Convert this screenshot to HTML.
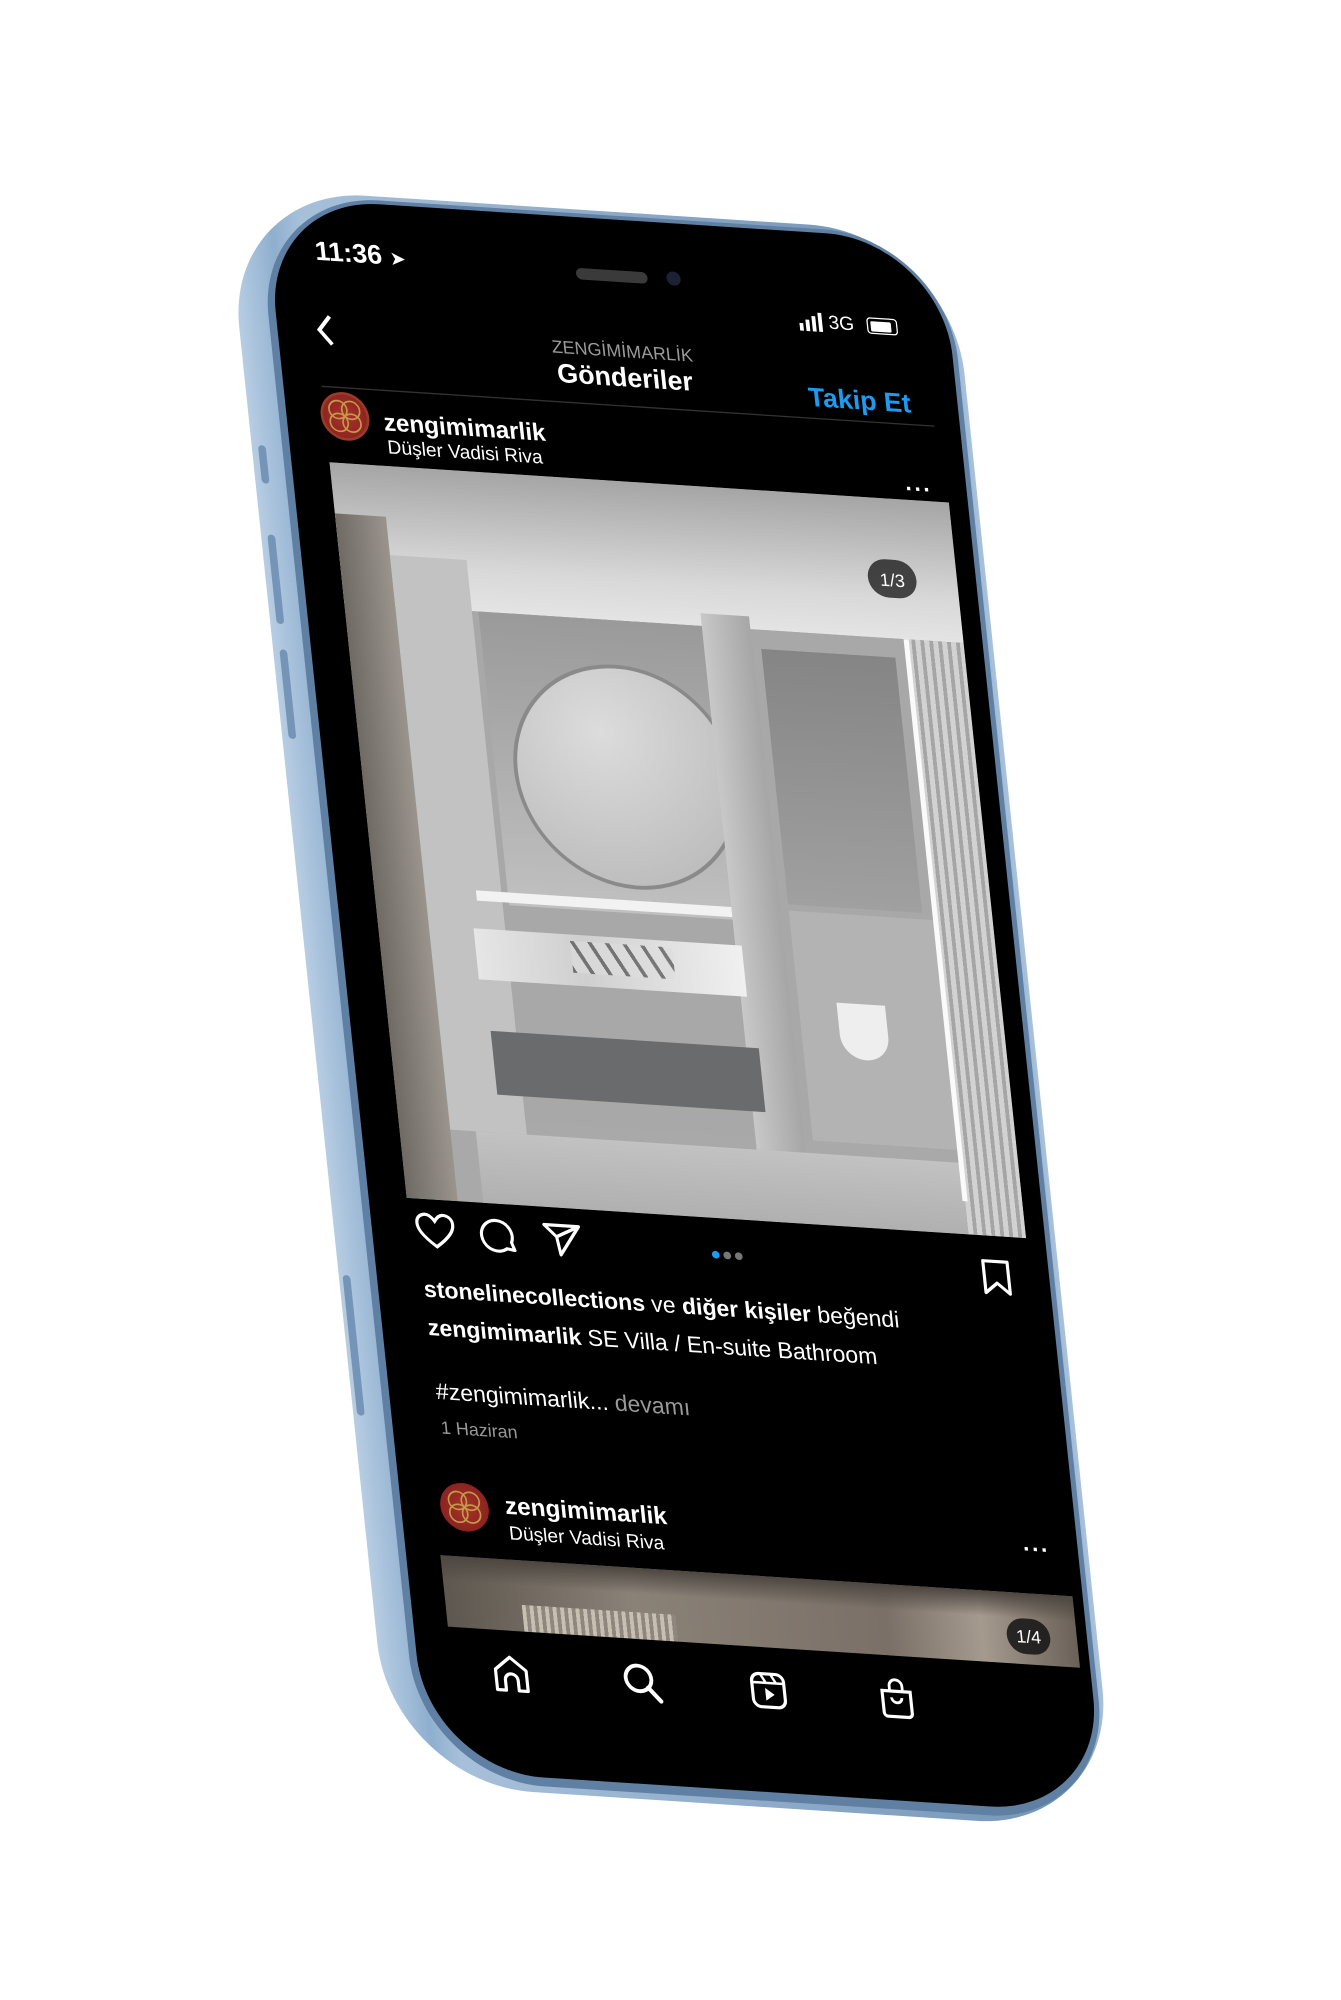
<!DOCTYPE html>
<html><head><meta charset="utf-8"><style>
html,body{margin:0;padding:0;background:#fff;width:1341px;height:2000px;overflow:hidden}
#w{position:absolute;left:0;top:0;width:1px;height:1px;transform-origin:0 0;transform:matrix(1.277,0.083,0.134,1.277,329.5,462.3)}
#w div,#w svg{position:absolute}
.t{font-family:"Liberation Sans","DejaVu Sans",sans-serif;color:#fff;white-space:nowrap;line-height:1}
</style></head><body>
<div id="w">
 <!-- phone body -->
 <div style="left:-60px;top:-212px;width:568px;height:1250px;border-radius:110px;background:linear-gradient(90deg,#b7cde3 0%,#8fafcf 6%,#a7c0da 10%,#7494b6 95%,#a9c2dc 100%)"></div>
 <div style="left:-36px;top:-209px;width:540px;height:1242px;border-radius:96px;background:#5f7fa3"></div>
 <div style="left:-30px;top:-206px;width:530px;height:1232px;border-radius:90px;background:#000"></div>
 <!-- buttons on side -->
 <div style="left:-55px;top:-10px;width:6px;height:30px;border-radius:3px;background:#7595b8"></div>
 <div style="left:-55px;top:60px;width:6px;height:70px;border-radius:3px;background:#7595b8"></div>
 <div style="left:-55px;top:150px;width:6px;height:70px;border-radius:3px;background:#7595b8"></div>
 <div style="left:-57px;top:640px;width:6px;height:110px;border-radius:3px;background:#7595b8"></div>

 <!-- status -->
 <div class="t" style="left:6px;top:-176px;font-size:21px;font-weight:bold">11:36 <span style="font-size:15px">➤</span></div>
 <div style="left:210px;top:-166px;width:56px;height:9px;border-radius:5px;background:#3a3a3a"></div>
 <div style="left:281px;top:-168px;width:11px;height:11px;border-radius:6px;background:#1c2233"></div>
 <svg style="left:382px;top:-143px" width="20" height="16"><rect x="0" y="9" width="3" height="6" fill="#fff"/><rect x="5" y="6" width="3" height="9" fill="#fff"/><rect x="10" y="3" width="3" height="12" fill="#fff"/><rect x="15" y="0" width="3" height="15" fill="#fff"/></svg>
 <div class="t" style="left:405px;top:-143px;font-size:15px">3G</div>
 <div style="left:435px;top:-142px;width:22px;height:11px;border:1.5px solid #fff;border-radius:3px"></div>
 <div style="left:438px;top:-139px;width:16px;height:8px;background:#fff;border-radius:1px"></div>

 <!-- nav -->
 <svg style="left:-2px;top:-118px" width="20" height="30"><path d="M14 3 L5 14 L14 25" stroke="#fff" stroke-width="3" fill="none"/></svg>
 <div class="t" style="left:160px;top:-110px;width:160px;text-align:center;font-size:14px;color:#9a9a9a">ZENGİMİMARLİK</div>
 <div class="t" style="left:160px;top:-92px;width:160px;text-align:center;font-size:21px;font-weight:bold">Gönderiler</div>
 <div class="t" style="left:383px;top:-86px;font-size:21px;font-weight:bold;color:#1d9bf0">Takip Et</div>
 <div style="left:0;top:-60px;width:480px;height:1px;background:#333"></div>

 <!-- post header -->
 <div style="left:-3px;top:-56px;width:38px;height:38px;border-radius:50%;background:radial-gradient(circle,#a8322a,#7e1d1c);box-shadow:inset 0 0 0 2px #9c3a2a"></div>
 <svg style="left:-3px;top:-56px" width="38" height="38"><circle cx="14" cy="14" r="7" stroke="#c49a4a" stroke-width="1.3" fill="none"/><circle cx="24" cy="14" r="7" stroke="#c49a4a" stroke-width="1.3" fill="none"/><circle cx="14" cy="24" r="7" stroke="#c49a4a" stroke-width="1.3" fill="none"/><circle cx="24" cy="24" r="7" stroke="#c49a4a" stroke-width="1.3" fill="none"/></svg>
 <div class="t" style="left:46px;top:-43px;font-size:19px;font-weight:bold">zengimimarlik</div>
 <div class="t" style="left:47px;top:-22px;font-size:15px">Düşler Vadisi Riva</div>
 <div class="t" style="left:452px;top:-18px;font-size:18px;font-weight:bold;letter-spacing:1px">···</div>

 <!-- image 1 -->
 <div style="left:0;top:0;width:485px;height:576px;overflow:hidden;background:#a9a9a9">
  <div style="left:0;top:0;width:485px;height:110px;background:linear-gradient(180deg,#a5a5a5,#d8d8d8 70%,#e4e4e4)"></div>
  <div style="left:0;top:40px;width:40px;height:536px;background:linear-gradient(90deg,#6f6a64,#9a948d)"></div>
  <div style="left:40px;top:70px;width:60px;height:450px;background:#c2c2c2"></div>
  <div style="left:100px;top:110px;width:340px;height:400px;background:#a8a8a8"></div>
  <div style="left:105px;top:110px;width:180px;height:230px;background:linear-gradient(180deg,#9a9a9a,#c0c0c0)"></div>
  <div style="left:120px;top:145px;width:170px;height:170px;border-radius:50%;background:radial-gradient(circle at 40% 30%,#dcdcdc,#b5b5b5);border:3px solid #8a8a8a"></div>
  <div style="left:280px;top:100px;width:38px;height:420px;background:linear-gradient(90deg,#c8c8c8,#a6a6a6)"></div>
  <div style="left:325px;top:125px;width:105px;height:200px;background:linear-gradient(180deg,#858585,#a0a0a0)"></div>
  <div style="left:325px;top:330px;width:115px;height:180px;background:#b3b3b3"></div>
  <div style="left:355px;top:400px;width:38px;height:44px;border-radius:0 0 20px 20px;background:#eee"></div>
  <div style="left:80px;top:330px;width:200px;height:8px;background:#f2f2f2"></div>
  <div style="left:75px;top:360px;width:210px;height:40px;background:linear-gradient(90deg,#e6e6e6,#cfcfcf 40%,#f0f0f0)"></div>
  <div style="left:150px;top:365px;width:80px;height:25px;background:repeating-linear-gradient(60deg,#333 0 3px,#ddd 3px 12px);opacity:.6"></div>
  <div style="left:80px;top:440px;width:210px;height:50px;background:#6a6b6d"></div>
  <div style="left:60px;top:520px;width:425px;height:56px;background:linear-gradient(180deg,#c2c2c2,#b0b0b0)"></div>
  <div style="left:440px;top:110px;width:45px;height:466px;background:repeating-linear-gradient(90deg,#d2d2d2 0 4px,#a5a5a5 4px 7px)"></div>
  <div style="left:438px;top:110px;width:4px;height:440px;background:#fafafa"></div>
  <div style="left:415px;top:48px;width:38px;height:30px;border-radius:15px;background:rgba(30,30,30,.8)"></div>
  <div class="t" style="left:415px;top:57px;width:38px;text-align:center;font-size:14px">1/3</div>
 </div>

 <!-- actions -->
 <svg style="left:4px;top:586px" width="32" height="30"><path d="M16 27 C4 18 2 13 2 9 C2 4 6 2 9 2 C12 2 14 4 16 7 C18 4 20 2 23 2 C26 2 30 4 30 9 C30 13 28 18 16 27Z" stroke="#fff" stroke-width="2.5" fill="none"/></svg>
 <svg style="left:54px;top:586px" width="32" height="32"><path d="M27 26 L25 20 A12 12 0 1 0 21 25 Z" stroke="#fff" stroke-width="2.5" fill="none" stroke-linejoin="round"/></svg>
 <svg style="left:104px;top:586px" width="32" height="30"><path d="M2 4 L29 4 L13 27 L11 13 Z M11 13 L29 4" stroke="#fff" stroke-width="2.5" fill="none" stroke-linejoin="round"/></svg>
 <div style="left:236px;top:602px;width:6px;height:6px;border-radius:3px;background:#1d9bf0"></div>
 <div style="left:245px;top:602px;width:6px;height:6px;border-radius:3px;background:#777"></div>
 <div style="left:254px;top:602px;width:6px;height:6px;border-radius:3px;background:#777"></div>
 <svg style="left:447px;top:594px" width="24" height="30"><path d="M2 2 L21 2 L21 27 L11.5 19 L2 27 Z" stroke="#fff" stroke-width="2.5" fill="none" stroke-linejoin="round"/></svg>

 <div class="t" style="left:6px;top:638px;font-size:18px"><b>stonelinecollections</b> ve <b>diğer kişiler</b> beğendi</div>
 <div class="t" style="left:6px;top:668px;font-size:18px"><b>zengimimarlik</b> SE Villa / En-suite Bathroom</div>
 <div class="t" style="left:7px;top:718px;font-size:18px">#zengimimarlik... <span style="color:#999">devamı</span></div>
 <div class="t" style="left:8px;top:748px;font-size:14px;color:#999">1 Haziran</div>

 <!-- post 2 header -->
 <div style="left:1px;top:798px;width:38px;height:38px;border-radius:50%;background:radial-gradient(circle,#a8322a,#7e1d1c)"></div>
 <svg style="left:1px;top:798px" width="38" height="38"><circle cx="14" cy="14" r="7" stroke="#c49a4a" stroke-width="1.3" fill="none"/><circle cx="24" cy="14" r="7" stroke="#c49a4a" stroke-width="1.3" fill="none"/><circle cx="14" cy="24" r="7" stroke="#c49a4a" stroke-width="1.3" fill="none"/><circle cx="24" cy="24" r="7" stroke="#c49a4a" stroke-width="1.3" fill="none"/></svg>
 <div class="t" style="left:52px;top:805px;font-size:19px;font-weight:bold">zengimimarlik</div>
 <div class="t" style="left:53px;top:828px;font-size:15px">Düşler Vadisi Riva</div>
 <div class="t" style="left:457px;top:812px;font-size:18px;font-weight:bold;letter-spacing:1px">···</div>

 <div style="left:-3px;top:856px;width:495px;height:56px;overflow:hidden;background:linear-gradient(90deg,#5e574f,#8a8177 30%,#7a7067 70%,#a59a8e 85%,#6a6158)">
  <div style="left:60px;top:35px;width:120px;height:21px;background:repeating-linear-gradient(90deg,#c8bfb3 0 3px,#8f877d 3px 6px)"></div>
  <div style="left:0;top:0;width:495px;height:20px;background:linear-gradient(180deg,#4c4640,rgba(0,0,0,0))"></div>
  <div style="left:440px;top:20px;width:34px;height:28px;border-radius:14px;background:rgba(20,20,20,.85)"></div>
  <div class="t" style="left:440px;top:27px;width:34px;text-align:center;font-size:14px">1/4</div>
 </div>

 <!-- bottom nav -->
 <svg style="left:28px;top:930px" width="30" height="32"><path d="M3 29 L3 13 L15 3 L27 13 L27 29 L20 29 L20 21 A5 5 0 0 0 10 21 L10 29 Z" stroke="#fff" stroke-width="2.5" fill="none" stroke-linejoin="round"/></svg>
 <svg style="left:130px;top:930px" width="32" height="34"><circle cx="13" cy="13" r="10" stroke="#fff" stroke-width="3" fill="none"/><path d="M20 20 L29 30" stroke="#fff" stroke-width="3.5" stroke-linecap="round"/></svg>
 <svg style="left:230px;top:930px" width="30" height="32"><rect x="2" y="3" width="25" height="26" rx="6" stroke="#fff" stroke-width="2.5" fill="none"/><path d="M2 10 L27 10 M9 3 L13 10 M17 3 L21 10" stroke="#fff" stroke-width="2"/><path d="M12 14 L19 19 L12 24 Z" fill="#fff"/></svg>
 <svg style="left:330px;top:928px" width="30" height="34"><path d="M4 12 L26 12 L26 29 A3 3 0 0 1 23 32 L7 32 A3 3 0 0 1 4 29 Z" stroke="#fff" stroke-width="2.5" fill="none"/><path d="M10 12 L10 8 A5 5 0 0 1 20 8 L20 12 M11 17 A4 4 0 0 0 19 17" stroke="#fff" stroke-width="2.2" fill="none"/></svg>
</div>
</body></html>
